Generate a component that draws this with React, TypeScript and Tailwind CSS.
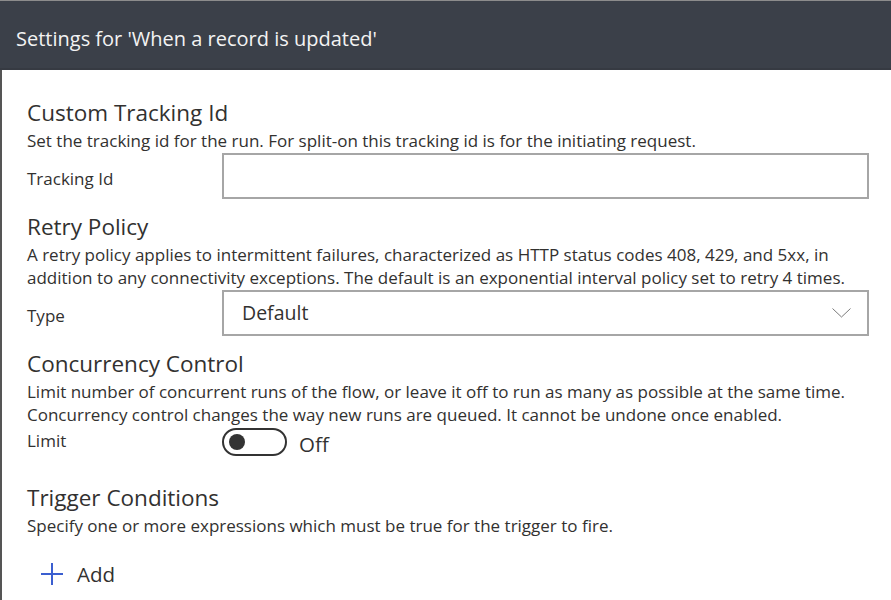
const font = { fontFamily: '"Open Sans", "Noto Sans", sans-serif' };

const SectionHeading = ({ title }: { title: string }) => (
  <h2 className="text-[22.5px] leading-[28px] text-[#323130]">{title}</h2>
);

const Description = ({ lines }: { lines: string[] }) => (
  <div className="pt-[2px] text-[17px] leading-[23px] text-[#323130]">
    {lines.map((l) => (
      <p key={l} className="whitespace-nowrap">{l}</p>
    ))}
  </div>
);

const FieldRow = ({ label, children, labelClass }: { label: string; children: React.ReactNode; labelClass?: string }) => (
  <div className="flex items-stretch">
    <div className={`w-[195px] shrink-0 text-[17px] leading-[23px] text-[#323130] ${labelClass ?? "pt-[14px]"}`}>{label}</div>
    <div className="flex-1">{children}</div>
  </div>
);

export default function App() {
  return (
    <div className="w-[891px] h-[600px] bg-white overflow-hidden flex flex-col" style={font}>
      <div className="h-[70px] shrink-0 bg-[#3b4049] border-t border-[#8c8c8c] border-b-2 border-b-[#363a42] flex items-center pl-4 pt-[8px]">
        <h1 className="text-[20px] text-[#f3f3f3]">Settings for 'When a record is updated'</h1>
      </div>
      <div className="flex-1 border-l-2 border-[#555] pl-[25px] pr-[22px] pt-[29px]">
        <SectionHeading title="Custom Tracking Id" />
        <Description lines={["Set the tracking id for the run. For split-on this tracking id is for the initiating request."]} />
        <div className="mt-[1px]">
          <FieldRow label="Tracking Id">
            <input className="w-full h-[46px] border-2 border-[#a6a6a6] outline-none px-3" />
          </FieldRow>
        </div>

        <div className="mt-[14px]">
          <SectionHeading title="Retry Policy" />
          <Description
            lines={[
              "A retry policy applies to intermittent failures, characterized as HTTP status codes 408, 429, and 5xx, in",
              "addition to any connectivity exceptions. The default is an exponential interval policy set to retry 4 times.",
            ]}
          />
          <div className="mt-[1px]">
            <FieldRow label="Type">
              <div className="w-full h-[46px] border-2 border-[#a6a6a6] flex items-center justify-between pl-[18px] pr-[16px]">
                <span className="text-[19.5px] text-[#323130]">Default</span>
                <svg width="19" height="10" viewBox="0 0 19 10" fill="none">
                  <path d="M0.5 0.5 L9.5 9 L18.5 0.5" stroke="#7a7a7a" strokeWidth="1" />
                </svg>
              </div>
            </FieldRow>
          </div>
        </div>

        <div className="mt-[14px]">
          <SectionHeading title="Concurrency Control" />
          <Description
            lines={[
              "Limit number of concurrent runs of the flow, or leave it off to run as many as possible at the same time.",
              "Concurrency control changes the way new runs are queued. It cannot be undone once enabled.",
            ]}
          />
          <div className="mt-[2px]">
            <FieldRow label="Limit" labelClass="pt-[1px]">
              <div className="h-[28px] flex items-start gap-3">
                <div className="w-[65px] h-[28px] rounded-full border-2 border-[#333] flex items-center pl-[5px]">
                  <div className="w-[16px] h-[16px] rounded-full bg-[#333]" />
                </div>
                <span className="text-[20.5px] leading-[24px] text-[#323130] pt-[4px]">Off</span>
              </div>
            </FieldRow>
          </div>
        </div>

        <div className="mt-[28px]">
          <SectionHeading title="Trigger Conditions" />
          <Description lines={["Specify one or more expressions which must be true for the trigger to fire."]} />
          <div className="mt-[23px] h-[28px] flex items-center pl-[13px] gap-[13px]">
            <svg width="24" height="24" viewBox="0 0 24 24" fill="none">
              <path d="M12 1 V23 M1 12 H23" stroke="#3b5fd0" strokeWidth="2" />
            </svg>
            <span className="text-[20.5px] leading-[28px] text-[#323130]">Add</span>
          </div>
        </div>
      </div>
    </div>
  );
}
